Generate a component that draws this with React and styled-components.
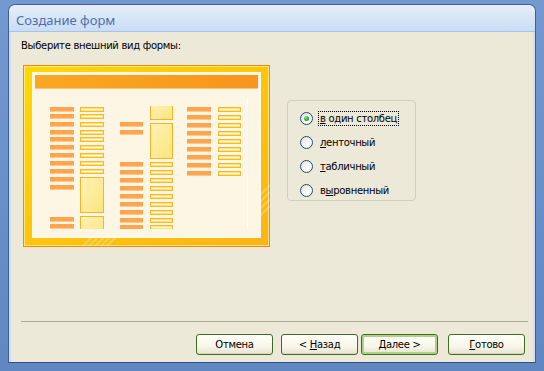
import React from 'react';
import styled, { createGlobalStyle } from 'styled-components';

const GlobalStyle = createGlobalStyle`
  html, body {
    margin: 0;
    padding: 0;
  }
  body {
    width: 544px;
    height: 371px;
    overflow: hidden;
    background: linear-gradient(#7499d0, #6087c1);
    font-family: "DejaVu Sans", sans-serif;
  }
`;

const Desktop = styled.div`
  padding: 4px 0 0 8px;
`;

const Window = styled.div`
  width: 528px;
  height: 359px;
  box-sizing: border-box;
  border: 1px solid #3f5f94;
  border-bottom-color: #34507e;
  border-radius: 7px 7px 0 0;
  overflow: hidden;
  display: flex;
  flex-direction: column;
`;

const TitleBar = styled.div`
  flex: none;
  height: 26px;
  border-bottom: 1px solid #a6c3ea;
  background: linear-gradient(#e6eefa, #d9e6f7 45%, #c9dcf4);
  padding-left: 7px;
  font: 13px "Noto Sans", sans-serif;
  line-height: 30px;
  color: #4d6fb1;
  overflow: hidden;
`;

const Client = styled.div`
  flex: 1;
  display: flex;
  flex-direction: column;
  background: #ece9d8;
  border-left: 2px solid #d2deef;
  border-right: 2px solid #d2deef;
  padding: 7px 5px 0 10px;
  font-size: 10px;
  letter-spacing: -0.3px;
  color: #000;
`;

const Heading = styled.div`
  line-height: 13px;
`;

const Main = styled.div`
  flex: 1;
  display: flex;
  align-items: flex-start;
  margin-top: 13px;
`;

const Preview = styled.svg`
  display: block;
  margin-left: 2px;
  flex: none;
`;

const OptionBox = styled.div`
  margin: 35px 0 0 17px;
  width: 129px;
  height: 101px;
  box-sizing: border-box;
  border: 1px solid #d0d0bf;
  border-radius: 4px;
  padding: 10px 0 0 12px;
  display: flex;
  flex-direction: column;
  gap: 9px;
`;

const OptionRow = styled.label`
  display: flex;
  align-items: center;
  height: 15px;
`;

const RadioDot = styled.span`
  flex: none;
  width: 13px;
  height: 13px;
  box-sizing: border-box;
  border-radius: 50%;
  border: 1px solid #1c5180;
  background: radial-gradient(circle at 65% 65%, #ffffff 0, #f5f4ee 45%, #d8d5c3 100%);
  display: flex;
  align-items: center;
  justify-content: center;
  margin-right: 5px;

  &::after {
    content: '';
    display: ${(p) => (p.$checked ? 'block' : 'none')};
    width: 5px;
    height: 5px;
    border-radius: 50%;
    background: radial-gradient(circle at 35% 35%, #8be48b, #2aa52a 60%, #1a8a1a);
  }
`;

const OptionText = styled.span`
  line-height: 13px;
  padding: 0 1px;
  border: 1px dotted ${(p) => (p.$focused ? '#000' : 'transparent')};
`;

const Key = styled.span`
  text-decoration: underline;
`;

const Separator = styled.div`
  border-top: 1px solid #aca899;
`;

const ButtonRow = styled.div`
  display: flex;
  justify-content: flex-end;
  padding: 12px 3px 7px 0;
`;

const Button = styled.button`
  width: 77px;
  height: 21px;
  margin-left: ${(p) => p.$gap || 0}px;
  padding: 0;
  border: 1px solid #3f6c22;
  border-radius: 3px;
  background: linear-gradient(#fffff8, #f7f6ea 60%, #e6e3cf);
  box-shadow: ${(p) => (p.$default ? 'inset 0 0 0 2px #add08a' : 'inset 0 -1px 0 #dcd8c0')};
  font-family: inherit;
  font-size: 10px;
  letter-spacing: -0.3px;
  color: #000;
`;

const col1 = [42, 49, 57, 65, 72, 80, 88, 96, 104, 112, 120, 152, 159];
const col2 = [42, 49, 57, 65, 72, 80, 88, 96, 104];
const col3 = [57, 65, 97, 105, 113, 121, 129, 137, 145, 153, 160];
const col4 = [97, 105, 113, 121, 129, 137, 145, 153, 160];
const col56 = [42, 50, 58, 66, 74, 82, 90, 98, 106];

function Label({ x, y, w }) {
  return (
    <g>
      <rect x={x} y={y} width={w} height={4} fill="#ffa550" />
      <rect x={x} y={y + 4} width={w} height={1} fill="#ffc98c" />
    </g>
  );
}

function Field({ x, y, w }) {
  return (
    <g>
      <rect x={x} y={y} width={w} height={5} fill="#f7b72d" />
      <rect x={x + 1} y={y + 1} width={w - 2} height={3} fill="#fde582" />
      <rect x={x + 2} y={y + 2} width={w - 4} height={1} fill="#fff5c2" />
    </g>
  );
}

function BigField({ x, y, w, h }) {
  return (
    <rect x={x + 0.5} y={y + 0.5} width={w - 1} height={h - 1} fill="url(#bigFill)" stroke="#f6b42c" />
  );
}

function FormPicture() {
  return (
    <Preview width="247" height="182" viewBox="0 0 247 182">
      <defs>
        <linearGradient id="frame" x1="0" y1="0" x2="1" y2="1">
          <stop offset="0" stopColor="#ffd800" />
          <stop offset="1" stopColor="#fcb414" />
        </linearGradient>
        <linearGradient id="bar" x1="0" y1="0" x2="1" y2="0">
          <stop offset="0" stopColor="#f9a823" />
          <stop offset="1" stopColor="#f7951c" />
        </linearGradient>
        <linearGradient id="bigFill" x1="0" y1="0" x2="1" y2="1">
          <stop offset="0" stopColor="#fff3b6" />
          <stop offset="1" stopColor="#fde47b" />
        </linearGradient>
        <clipPath id="body">
          <rect x="10" y="41" width="227" height="123" />
        </clipPath>
      </defs>
      <rect x="0.5" y="0.5" width="246" height="181" fill="url(#frame)" stroke="#f58a08" />
      <rect x="1.5" y="1.5" width="244" height="179" fill="none" stroke="#fff0b0" strokeOpacity="0.7" />
      <g stroke="#ffffff" strokeOpacity="0.25" strokeWidth="2">
        <path d="M60 181 L70 171 M66 181 L76 171 M72 181 L82 171 M78 181 L88 171 M84 181 L94 171" />
        <path d="M237 130 L247 120 M237 137 L247 127 M237 144 L247 134 M237 151 L247 141" />
      </g>
      <rect x="9.5" y="7.5" width="228" height="165" fill="#fdf6e4" stroke="#fffaee" />
      <rect x="12" y="10" width="223" height="13" fill="url(#bar)" />
      <rect x="12" y="23" width="223" height="1" fill="#fbc877" />
      <rect x="224" y="33" width="1" height="131" fill="#ffffff" />
      <g clipPath="url(#body)">
        {col1.map((y) => <Label key={'a' + y} x={27} y={y} w={24} />)}
        {col2.map((y) => <Field key={'b' + y} x={57} y={y} w={24} />)}
        <BigField x={57} y={112} w={24} h={36} />
        <BigField x={57} y={151} w={24} h={20} />
        {col3.map((y) => <Label key={'c' + y} x={97} y={y} w={23} />)}
        <BigField x={127} y={38} w={23} h={17} />
        <BigField x={127} y={58} w={23} h={36} />
        {col4.map((y) => <Field key={'d' + y} x={127} y={y} w={23} />)}
        {col56.map((y) => <Label key={'e' + y} x={164} y={y} w={24} />)}
        {col56.map((y) => <Field key={'f' + y} x={195} y={y} w={23} />)}
      </g>
    </Preview>
  );
}

const options = [
  { key: 'в', rest: ' один столбец', checked: true },
  { key: 'л', rest: 'енточный' },
  { key: 'т', rest: 'абличный' },
  { pre: 'в', key: 'ы', rest: 'ровненный' },
];

export default function App() {
  return (
    <>
      <GlobalStyle />
      <Desktop>
        <Window>
          <TitleBar>Создание форм</TitleBar>
          <Client>
            <Heading>Выберите внешний вид формы:</Heading>
            <Main>
              <FormPicture />
              <OptionBox>
                {options.map((o) => (
                  <OptionRow key={o.rest}>
                    <RadioDot $checked={o.checked} />
                    <OptionText $focused={o.checked}>
                      {o.pre}
                      <Key>{o.key}</Key>
                      {o.rest}
                    </OptionText>
                  </OptionRow>
                ))}
              </OptionBox>
            </Main>
            <Separator />
            <ButtonRow>
              <Button>Отмена</Button>
              <Button $gap={8}>
                &lt; <Key>Н</Key>азад
              </Button>
              <Button $gap={3} $default>
                <Key>Д</Key>алее &gt;
              </Button>
              <Button $gap={10}>
                <Key>Г</Key>отово
              </Button>
            </ButtonRow>
          </Client>
        </Window>
      </Desktop>
    </>
  );
}
